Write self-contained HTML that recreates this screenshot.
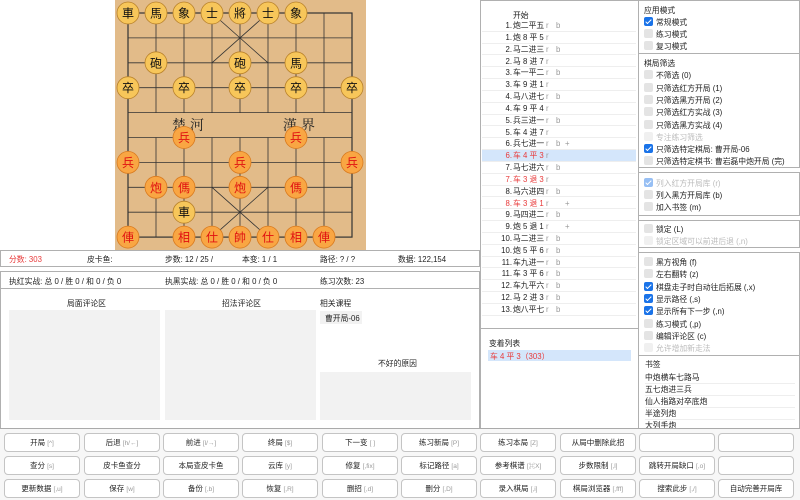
<!DOCTYPE html>
<html><head><meta charset="utf-8"><style>
*{margin:0;padding:0;box-sizing:border-box}
body{width:800px;height:500px;background:#fff;font-family:"Liberation Sans","Noto Sans CJK SC",sans-serif;font-size:7.8px;color:#222;position:relative;overflow:hidden}
.a{position:absolute;white-space:nowrap}
.box{position:absolute;border:1px solid #b0b0b0}
.g{position:absolute;background:#f2f2f2}
.cb{position:absolute;width:9px;height:9px;border-radius:2px;background:#e4e4e4}
.cb.on{background:#1a73e8}
.cb.on::after{content:"";position:absolute;left:3px;top:1px;width:2px;height:5px;border:solid #fff;border-width:0 1.5px 1.5px 0;transform:rotate(45deg)}
.btn{position:absolute;width:76px;height:19px;border:1px solid #c4c4c4;border-radius:4px;background:#fff;text-align:center;line-height:17px;font-size:7.5px}
.btn i{font-style:normal;color:#999;font-size:6.5px}
.mv{position:absolute;left:482px;width:154px;height:11.8px;border-bottom:1px solid #eee;line-height:11px}
.mv .n{position:absolute;right:124px}
.mv .t{position:absolute;left:31px}
.mv .r{position:absolute;left:64px;color:#999}
.mv .b{position:absolute;left:74px;color:#999}
.mv .p{position:absolute;left:83px;color:#999}
.red{color:#e83a3a}
.dis{color:#bbb}
</style></head><body>

<svg class="a" style="left:115px;top:0" width="251" height="250" viewBox="115 0 251 250">
<rect x="115" y="0" width="251" height="250" fill="#e2bb89"/>
<g stroke="#333" stroke-width="0.8" fill="none">
<rect x="128" y="13" width="224" height="224.1" stroke-width="1.2"/>
<line x1="128" y1="37.9" x2="352" y2="37.9"/><line x1="128" y1="62.8" x2="352" y2="62.8"/><line x1="128" y1="87.7" x2="352" y2="87.7"/><line x1="128" y1="112.6" x2="352" y2="112.6"/><line x1="128" y1="137.5" x2="352" y2="137.5"/><line x1="128" y1="162.4" x2="352" y2="162.4"/><line x1="128" y1="187.3" x2="352" y2="187.3"/><line x1="128" y1="212.2" x2="352" y2="212.2"/>
<line x1="156" y1="13" x2="156" y2="112.6"/><line x1="184" y1="13" x2="184" y2="112.6"/><line x1="212" y1="13" x2="212" y2="112.6"/><line x1="240" y1="13" x2="240" y2="112.6"/><line x1="268" y1="13" x2="268" y2="112.6"/><line x1="296" y1="13" x2="296" y2="112.6"/><line x1="324" y1="13" x2="324" y2="112.6"/>
<line x1="156" y1="137.5" x2="156" y2="237.1"/><line x1="184" y1="137.5" x2="184" y2="237.1"/><line x1="212" y1="137.5" x2="212" y2="237.1"/><line x1="240" y1="137.5" x2="240" y2="237.1"/><line x1="268" y1="137.5" x2="268" y2="237.1"/><line x1="296" y1="137.5" x2="296" y2="237.1"/><line x1="324" y1="137.5" x2="324" y2="237.1"/>
<line x1="212" y1="13" x2="268" y2="62.8"/><line x1="268" y1="13" x2="212" y2="62.8"/>
<line x1="212" y1="187.3" x2="268" y2="237.1"/><line x1="268" y1="187.3" x2="212" y2="237.1"/>
</g>
<g font-family="'Noto Serif CJK SC','Noto Sans CJK SC',serif" font-size="14" fill="#222"><text x="172" y="130">楚</text><text x="190" y="130">河</text><text x="283" y="130">漢</text><text x="301" y="130">界</text></g>
<g font-family="'Noto Sans CJK SC',sans-serif" font-size="12" text-anchor="middle">
<g fill="#f7c65a" stroke="#b9822a" stroke-width="0.8">
<circle cx="128" cy="13" r="11"/><circle cx="156" cy="13" r="11"/><circle cx="184" cy="13" r="11"/><circle cx="212" cy="13" r="11"/><circle cx="240" cy="13" r="11"/><circle cx="268" cy="13" r="11"/><circle cx="296" cy="13" r="11"/>
<circle cx="156" cy="62.8" r="11"/><circle cx="240" cy="62.8" r="11"/><circle cx="296" cy="62.8" r="11"/>
<circle cx="128" cy="87.7" r="11"/><circle cx="184" cy="87.7" r="11"/><circle cx="240" cy="87.7" r="11"/><circle cx="296" cy="87.7" r="11"/><circle cx="352" cy="87.7" r="11"/>
<circle cx="184" cy="212.2" r="11"/>
</g>
<g fill="#111">
<text x="128" y="17.5">車</text><text x="156" y="17.5">馬</text><text x="184" y="17.5">象</text><text x="212" y="17.5">士</text><text x="240" y="17.5">將</text><text x="268" y="17.5">士</text><text x="296" y="17.5">象</text>
<text x="156" y="67.3">砲</text><text x="240" y="67.3">砲</text><text x="296" y="67.3">馬</text>
<text x="128" y="92.2">卒</text><text x="184" y="92.2">卒</text><text x="240" y="92.2">卒</text><text x="296" y="92.2">卒</text><text x="352" y="92.2">卒</text>
<text x="184" y="216.7">車</text>
</g>
<g fill="#f9a643" stroke="#d97a1e" stroke-width="0.8">
<circle cx="184" cy="137.5" r="11"/><circle cx="296" cy="137.5" r="11"/>
<circle cx="128" cy="162.4" r="11"/><circle cx="240" cy="162.4" r="11"/><circle cx="352" cy="162.4" r="11"/>
<circle cx="156" cy="187.3" r="11"/><circle cx="184" cy="187.3" r="11"/><circle cx="240" cy="187.3" r="11"/><circle cx="296" cy="187.3" r="11"/>
<circle cx="128" cy="237.1" r="11"/><circle cx="184" cy="237.1" r="11"/><circle cx="212" cy="237.1" r="11"/><circle cx="240" cy="237.1" r="11"/><circle cx="268" cy="237.1" r="11"/><circle cx="296" cy="237.1" r="11"/><circle cx="324" cy="237.1" r="11"/>
</g>
<g fill="#e01010">
<text x="184" y="142">兵</text><text x="296" y="142">兵</text>
<text x="128" y="166.9">兵</text><text x="240" y="166.9">兵</text><text x="352" y="166.9">兵</text>
<text x="156" y="191.8">炮</text><text x="184" y="191.8">傌</text><text x="240" y="191.8">炮</text><text x="296" y="191.8">傌</text>
<text x="128" y="241.6">俥</text><text x="184" y="241.6">相</text><text x="212" y="241.6">仕</text><text x="240" y="241.6">帥</text><text x="268" y="241.6">仕</text><text x="296" y="241.6">相</text><text x="324" y="241.6">俥</text>
</g></g>
</svg>

<!-- info bars -->
<div class="box" style="left:0;top:250px;width:480px;height:17px"></div>
<div class="a red" style="left:9px;top:254px">分数: 303</div>
<div class="a" style="left:87px;top:254px">皮卡鱼:</div>
<div class="a" style="left:165px;top:254px">步数: 12 / 25 /</div>
<div class="a" style="left:242px;top:254px">本变: 1 / 1</div>
<div class="a" style="left:320px;top:254px">路径: ? / ?</div>
<div class="a" style="left:398px;top:254px">数据: 122,154</div>
<div class="box" style="left:0;top:271px;width:480px;height:18px"></div>
<div class="a" style="left:9px;top:276px">执红实战: 总 0 / 胜 0 / 和 0 / 负 0</div>
<div class="a" style="left:165px;top:276px">执黑实战: 总 0 / 胜 0 / 和 0 / 负 0</div>
<div class="a" style="left:320px;top:276px">练习次数: 23</div>
<div class="box" style="left:0;top:288px;width:480px;height:141px"></div>
<div class="a" style="left:67px;top:298px">局面评论区</div>
<div class="g" style="left:9px;top:310px;width:151px;height:110px"></div>
<div class="a" style="left:222px;top:298px">招法评论区</div>
<div class="g" style="left:165px;top:310px;width:151px;height:110px"></div>
<div class="a" style="left:320px;top:298px">相关课程</div>
<div class="g" style="left:320px;top:311px;width:42px;height:13px"></div>
<div class="a" style="left:325px;top:313px">曹开局-06</div>
<div class="a" style="left:378px;top:358px">不好的原因</div>
<div class="g" style="left:320px;top:372px;width:151px;height:48px"></div>

<!-- middle list -->
<div class="box" style="left:480px;top:0;width:159px;height:429px"></div>
<div class="a" style="left:480px;top:328px;width:159px;border-top:1px solid #b0b0b0"></div>
<div class="a" style="left:513px;top:10px">开始</div>
<div class="mv" style="top:20px"><span class="n">1.</span><span class="t">炮二平五</span><span class="r">r</span><span class="b">b</span></div>
<div class="mv" style="top:31.8px"><span class="n">1.</span><span class="t">炮 8 平 5</span><span class="r">r</span></div>
<div class="mv" style="top:43.7px"><span class="n">2.</span><span class="t">马二进三</span><span class="r">r</span><span class="b">b</span></div>
<div class="mv" style="top:55.5px"><span class="n">2.</span><span class="t">马 8 进 7</span><span class="r">r</span></div>
<div class="mv" style="top:67.3px"><span class="n">3.</span><span class="t">车一平二</span><span class="r">r</span><span class="b">b</span></div>
<div class="mv" style="top:79.2px"><span class="n">3.</span><span class="t">车 9 进 1</span><span class="r">r</span></div>
<div class="mv" style="top:91px"><span class="n">4.</span><span class="t">马八进七</span><span class="r">r</span><span class="b">b</span></div>
<div class="mv" style="top:102.8px"><span class="n">4.</span><span class="t">车 9 平 4</span><span class="r">r</span></div>
<div class="mv" style="top:114.6px"><span class="n">5.</span><span class="t">兵三进一</span><span class="r">r</span><span class="b">b</span></div>
<div class="mv" style="top:126.5px"><span class="n">5.</span><span class="t">车 4 进 7</span><span class="r">r</span></div>
<div class="mv" style="top:138.3px"><span class="n">6.</span><span class="t">兵七进一</span><span class="r">r</span><span class="b">b</span><span class="p">+</span></div>
<div class="mv red" style="top:150.1px;background:#d4e6fb"><span class="n">6.</span><span class="t">车 4 平 3</span><span class="r">r</span></div>
<div class="mv" style="top:162px"><span class="n">7.</span><span class="t">马七进六</span><span class="r">r</span><span class="b">b</span></div>
<div class="mv red" style="top:173.8px"><span class="n">7.</span><span class="t">车 3 退 3</span><span class="r">r</span></div>
<div class="mv" style="top:185.6px"><span class="n">8.</span><span class="t">马六进四</span><span class="r">r</span><span class="b">b</span></div>
<div class="mv red" style="top:197.5px"><span class="n">8.</span><span class="t">车 3 退 1</span><span class="r">r</span><span class="p">+</span></div>
<div class="mv" style="top:209.3px"><span class="n">9.</span><span class="t">马四进二</span><span class="r">r</span><span class="b">b</span></div>
<div class="mv" style="top:221.1px"><span class="n">9.</span><span class="t">炮 5 退 1</span><span class="r">r</span><span class="p">+</span></div>
<div class="mv" style="top:232.9px"><span class="n">10.</span><span class="t">马二进三</span><span class="r">r</span><span class="b">b</span></div>
<div class="mv" style="top:244.8px"><span class="n">10.</span><span class="t">炮 5 平 6</span><span class="r">r</span><span class="b">b</span></div>
<div class="mv" style="top:256.6px"><span class="n">11.</span><span class="t">车九进一</span><span class="r">r</span><span class="b">b</span></div>
<div class="mv" style="top:268.4px"><span class="n">11.</span><span class="t">车 3 平 6</span><span class="r">r</span><span class="b">b</span></div>
<div class="mv" style="top:280.3px"><span class="n">12.</span><span class="t">车九平六</span><span class="r">r</span><span class="b">b</span></div>
<div class="mv" style="top:292.1px"><span class="n">12.</span><span class="t">马 2 进 3</span><span class="r">r</span><span class="b">b</span></div>
<div class="mv" style="top:303.9px"><span class="n">13.</span><span class="t">炮八平七</span><span class="r">r</span><span class="b">b</span></div>
<div class="a" style="left:489px;top:338px">变着列表</div>
<div class="a" style="left:488px;top:350px;width:143px;height:11px;background:#d4e6fb"></div>
<div class="a red" style="left:490px;top:351px">车 4 平 3（303）</div>

<!-- right panel -->
<div class="box" style="left:638px;top:0;width:162px;height:54px"></div>
<div class="a" style="left:644px;top:5px">应用模式</div>
<div class="cb on" style="left:644px;top:17px"></div><div class="a" style="left:656px;top:17px">常规模式</div>
<div class="cb" style="left:644px;top:29px"></div><div class="a" style="left:656px;top:29px">练习模式</div>
<div class="cb" style="left:644px;top:41px"></div><div class="a" style="left:656px;top:41px">复习模式</div>
<div class="box" style="left:638px;top:53px;width:162px;height:115px"></div>
<div class="a" style="left:644px;top:58px">棋局筛选</div>
<div class="cb" style="left:644px;top:70px"></div><div class="a" style="left:656px;top:70px">不筛选 (0)</div>
<div class="cb" style="left:644px;top:83px"></div><div class="a" style="left:656px;top:83px">只筛选红方开局 (1)</div>
<div class="cb" style="left:644px;top:95px"></div><div class="a" style="left:656px;top:95px">只筛选黑方开局 (2)</div>
<div class="cb" style="left:644px;top:107px"></div><div class="a" style="left:656px;top:107px">只筛选红方实战 (3)</div>
<div class="cb" style="left:644px;top:120px"></div><div class="a" style="left:656px;top:120px">只筛选黑方实战 (4)</div>
<div class="cb" style="left:644px;top:132px;background:#f0f0f0"></div><div class="a dis" style="left:656px;top:132px">专注练习筛选</div>
<div class="cb on" style="left:644px;top:144px"></div><div class="a" style="left:656px;top:144px">只筛选特定棋局: 曹开局-06</div>
<div class="cb" style="left:644px;top:156px"></div><div class="a" style="left:656px;top:156px">只筛选特定棋书: 曹岩磊中炮开局 (完)</div>
<div class="box" style="left:638px;top:172px;width:162px;height:44px"></div>
<div class="cb on" style="left:644px;top:178px;opacity:.45"></div><div class="a dis" style="left:656px;top:178px">列入红方开局库 (r)</div>
<div class="cb" style="left:644px;top:190px"></div><div class="a" style="left:656px;top:190px">列入黑方开局库 (b)</div>
<div class="cb" style="left:644px;top:202px"></div><div class="a" style="left:656px;top:202px">加入书签 (m)</div>
<div class="box" style="left:638px;top:220px;width:162px;height:28px"></div>
<div class="cb" style="left:644px;top:224px"></div><div class="a" style="left:656px;top:224px">锁定 (L)</div>
<div class="cb" style="left:644px;top:236px;background:#f0f0f0"></div><div class="a dis" style="left:656px;top:236px">锁定区域可以前进后退 (,n)</div>
<div class="box" style="left:638px;top:252px;width:162px;height:104px"></div>
<div class="cb" style="left:644px;top:257px"></div><div class="a" style="left:656px;top:257px">黑方视角 (f)</div>
<div class="cb" style="left:644px;top:269px"></div><div class="a" style="left:656px;top:269px">左右翻转 (z)</div>
<div class="cb on" style="left:644px;top:282px"></div><div class="a" style="left:656px;top:282px">棋盘走子时自动往后拓展 (,x)</div>
<div class="cb on" style="left:644px;top:294px"></div><div class="a" style="left:656px;top:294px">显示路径 (,s)</div>
<div class="cb on" style="left:644px;top:306px"></div><div class="a" style="left:656px;top:306px">显示所有下一步 (,n)</div>
<div class="cb" style="left:644px;top:319px"></div><div class="a" style="left:656px;top:319px">练习模式 (,p)</div>
<div class="cb" style="left:644px;top:331px"></div><div class="a" style="left:656px;top:331px">编辑评论区 (c)</div>
<div class="cb" style="left:644px;top:343px;background:#f0f0f0"></div><div class="a dis" style="left:656px;top:343px">允许增加新走法</div>
<div class="box" style="left:638px;top:355px;width:162px;height:74px"></div>
<div class="a" style="left:645px;top:359px">书签</div>
<div class="a" style="left:645px;top:372px;width:150px;border-bottom:1px solid #eee;height:12px">中炮横车七路马</div>
<div class="a" style="left:645px;top:384px;width:150px;border-bottom:1px solid #eee;height:12px">五七炮进三兵</div>
<div class="a" style="left:645px;top:396px;width:150px;border-bottom:1px solid #eee;height:12px">仙人指路对卒底炮</div>
<div class="a" style="left:645px;top:408px;width:150px;border-bottom:1px solid #eee;height:12px">半途列炮</div>
<div class="a" style="left:645px;top:420px">大列手炮</div>

<!-- buttons -->
<div class="a" style="left:0;top:428px;width:800px;height:72px;background:#f7f7f7;border-top:1px solid #aaa"></div>
<div class="btn" style="left:4px;top:433px">开局 <i>[^]</i></div>
<div class="btn" style="left:84px;top:433px">后退 <i>[h/←]</i></div>
<div class="btn" style="left:163px;top:433px">前进 <i>[l/→]</i></div>
<div class="btn" style="left:242px;top:433px">终局 <i>[$]</i></div>
<div class="btn" style="left:322px;top:433px">下一变 <i>[ ]</i></div>
<div class="btn" style="left:401px;top:433px">练习新局 <i>[P]</i></div>
<div class="btn" style="left:480px;top:433px">练习本局 <i>[Z]</i></div>
<div class="btn" style="left:560px;top:433px">从局中删除此招</div>
<div class="btn" style="left:639px;top:433px"></div>
<div class="btn" style="left:718px;top:433px"></div>
<div class="btn" style="left:4px;top:456px">查分 <i>[s]</i></div>
<div class="btn" style="left:84px;top:456px">皮卡鱼查分</div>
<div class="btn" style="left:163px;top:456px">本局查皮卡鱼</div>
<div class="btn" style="left:242px;top:456px">云库 <i>[y]</i></div>
<div class="btn" style="left:322px;top:456px">修复 <i>[,fix]</i></div>
<div class="btn" style="left:401px;top:456px">标记路径 <i>[a]</i></div>
<div class="btn" style="left:480px;top:456px">参考棋谱 <i>[⌘X]</i></div>
<div class="btn" style="left:560px;top:456px">步数限制 <i>[,l]</i></div>
<div class="btn" style="left:639px;top:456px">跳转开局缺口 <i>[,o]</i></div>
<div class="btn" style="left:718px;top:456px"></div>
<div class="btn" style="left:4px;top:479px">更新数据 <i>[,u]</i></div>
<div class="btn" style="left:84px;top:479px">保存 <i>[w]</i></div>
<div class="btn" style="left:163px;top:479px">备份 <i>[,b]</i></div>
<div class="btn" style="left:242px;top:479px">恢复 <i>[,R]</i></div>
<div class="btn" style="left:322px;top:479px">删招 <i>[,d]</i></div>
<div class="btn" style="left:401px;top:479px">删分 <i>[,D]</i></div>
<div class="btn" style="left:480px;top:479px">录入棋局 <i>[,i]</i></div>
<div class="btn" style="left:560px;top:479px">棋局浏览器 <i>[,fff]</i></div>
<div class="btn" style="left:639px;top:479px">搜索此步 <i>[,/]</i></div>
<div class="btn" style="left:718px;top:479px">自动完善开局库</div>
</body></html>
